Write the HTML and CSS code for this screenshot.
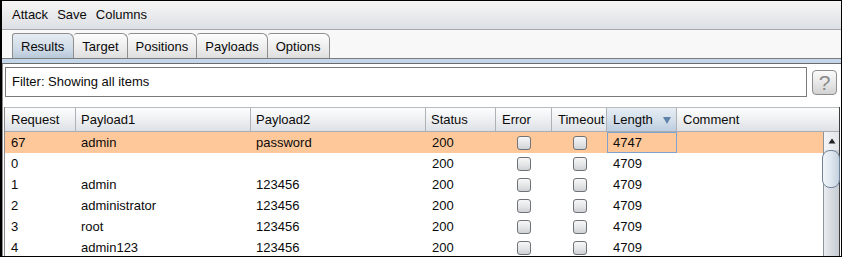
FILE: index.html
```html
<!DOCTYPE html>
<html>
<head>
<meta charset="utf-8">
<link rel="stylesheet" href="styles.css">
</head>
<body>
<div class="win">
  <div class="menubar">
    <span class="menu-item">Attack</span>
    <span class="menu-item">Save</span>
    <span class="menu-item">Columns</span>
  </div>
  <div class="tabbar">
    <div class="tab sel">Results</div>
    <div class="tab">Target</div>
    <div class="tab">Positions</div>
    <div class="tab">Payloads</div>
    <div class="tab">Options</div>
  </div>
  <div class="band"></div>
  <div class="content">
    <div class="filter-row">
      <div class="filter">Filter: Showing all items</div>
      <div class="help">?</div>
    </div>
    <div class="table">
      <div class="thead">
        <div class="th">Request</div>
        <div class="th">Payload1</div>
        <div class="th">Payload2</div>
        <div class="th">Status</div>
        <div class="th">Error</div>
        <div class="th">Timeout</div>
        <div class="th sorted">Length<span class="sort-arrow"></span></div>
        <div class="th last">Comment</div>
      </div>
      <div class="body-wrap">
        <div class="tbody">
          <div class="tr hl">
            <div class="td">67</div><div class="td">admin</div><div class="td">password</div><div class="td">200</div>
            <div class="td cb"><span class="check"></span></div><div class="td cb"><span class="check"></span></div>
            <div class="td focus">4747</div><div class="td"></div>
          </div>
          <div class="tr">
            <div class="td">0</div><div class="td"></div><div class="td"></div><div class="td">200</div>
            <div class="td cb"><span class="check"></span></div><div class="td cb"><span class="check"></span></div>
            <div class="td">4709</div><div class="td"></div>
          </div>
          <div class="tr">
            <div class="td">1</div><div class="td">admin</div><div class="td">123456</div><div class="td">200</div>
            <div class="td cb"><span class="check"></span></div><div class="td cb"><span class="check"></span></div>
            <div class="td">4709</div><div class="td"></div>
          </div>
          <div class="tr">
            <div class="td">2</div><div class="td">administrator</div><div class="td">123456</div><div class="td">200</div>
            <div class="td cb"><span class="check"></span></div><div class="td cb"><span class="check"></span></div>
            <div class="td">4709</div><div class="td"></div>
          </div>
          <div class="tr">
            <div class="td">3</div><div class="td">root</div><div class="td">123456</div><div class="td">200</div>
            <div class="td cb"><span class="check"></span></div><div class="td cb"><span class="check"></span></div>
            <div class="td">4709</div><div class="td"></div>
          </div>
          <div class="tr">
            <div class="td">4</div><div class="td">admin123</div><div class="td">123456</div><div class="td">200</div>
            <div class="td cb"><span class="check"></span></div><div class="td cb"><span class="check"></span></div>
            <div class="td">4709</div><div class="td"></div>
          </div>
        </div>
        <div class="scrollbar">
          <div class="sb-up"><svg width="8" height="6" viewBox="0 0 8 6"><path d="M4 0.5 L7.5 5.5 L0.5 5.5 Z" fill="#222"/></svg></div>
          <div class="sb-thumb"></div>
        </div>
      </div>
    </div>
  </div>
</div>
</body>
</html>
```
FILE: styles.css
```css
* { box-sizing: border-box; }
html, body { margin: 0; padding: 0; background: #000; }
body {
  width: 842px;
  height: 257px;
  overflow: hidden;
  font-family: "Liberation Sans", Arial, sans-serif;
  font-size: 13px;
  color: #0a0a0a;
}
.win {
  width: 842px;
  height: 257px;
  border-top: 1px solid #000;
  border-left: 2px solid #000;
  border-right: 1px solid #000;
  border-bottom: 1px solid #000;
  background: #fff;
  overflow: hidden;
  display: flex;
  flex-direction: column;
}
.menubar {
  height: 29px;
  flex: none;
  display: flex;
  align-items: center;
  padding-left: 10px;
  gap: 9px;
  background: linear-gradient(#f6f6f6, #e9eaec 55%, #dcdfe4);
  border-bottom: 1px solid #a6a8ab;
}
.menu-item { line-height: 28px; }
.tabbar {
  height: 28px;
  flex: none;
  display: flex;
  align-items: flex-end;
  padding-left: 10px;
  background: #f8f8f8;
}
.tab {
  height: 25px;
  line-height: 25px;
  padding: 0 8px 0 8px;
  border: 1px solid #8e8e8e;
  border-bottom: none;
  border-left: none;
  border-radius: 3px 6px 0 0;
  background: linear-gradient(#fdfdfd, #ececec 60%, #dedede);
}
.tab:first-child { border-left: 1px solid #8e8e8e; }
.tab.sel {
  background: linear-gradient(#e6ecf2, #cfdbe7 60%, #b8c9da);
  padding: 0 9px 0 8px;
}
.band {
  height: 6px;
  flex: none;
  border-top: 1px solid #7c7c7c;
  border-bottom: 1px solid #6c6c6c;
  background: #c3d6ea;
}
.content {
  flex: 1;
  background: #fff;
  padding: 3px 1px 0 2px;
  border-left: 1px solid #8a8a8a;
}
.filter-row {
  display: flex;
  align-items: center;
  height: 30px;
  margin-bottom: 10px;
  gap: 5px;
}
.filter {
  width: 802px;
  height: 30px;
  border: 1px solid #7a7a7a;
  padding-left: 6px;
  line-height: 28px;
  background: #fff;
}
.help {
  width: 25px;
  height: 25px;
  border: 1px solid #8d8d8d;
  border-radius: 4px;
  background: linear-gradient(#fbfbfb, #e6e6e6 55%, #d2d2d2);
  color: #8a8a8a;
  font-size: 21px;
  line-height: 23px;
  text-align: center;
}
.table {
  border-left: 1px solid #8a8a8a;
  border-right: 1px solid #3c3c3c;
  margin-left: -1px;
}
.thead {
  display: grid;
  grid-template-columns: 71px 175px 175px 70px 56px 55px 70px 1fr;
  height: 25px;
  background: linear-gradient(#fdfdfd, #eef0f2 50%, #dde0e5);
  border-top: 1px solid #b9bcc0;
  border-bottom: 1px solid #a9adb2;
}
.th {
  padding-left: 6px;
  line-height: 23px;
  border-right: 1px solid #aeb2b7;
  position: relative;
}
.th:nth-child(2), .th:nth-child(3), .th:nth-child(4) { padding-left: 5px; }
.th.last { border-right: none; }
.th.sorted {
  background: linear-gradient(#e6edf4, #d2deea 55%, #bccddf);
}
.sort-arrow {
  position: absolute;
  right: 5px;
  top: 9px;
  width: 0;
  height: 0;
  border-left: 4px solid transparent;
  border-right: 4px solid transparent;
  border-top: 7px solid #5f82ab;
}
.body-wrap {
  display: flex;
  height: 130px;
}
.tbody { flex: 1; }
.tr {
  display: grid;
  grid-template-columns: 71px 175px 175px 70px 56px 55px 70px 1fr;
  height: 21px;
}
.tr.hl { background: #ffc89a; }
.td {
  padding-left: 6px;
  padding-top: 1px;
  line-height: 20px;
  white-space: nowrap;
}
.td:nth-child(2), .td:nth-child(3) { padding-left: 5px; }
.td.cb {
  padding: 1px 0 0 0;
  display: flex;
  align-items: center;
  justify-content: center;
}
.check {
  width: 14px;
  height: 14px;
  border: 1px solid #6f7276;
  border-radius: 3px;
  background: linear-gradient(#f7f7f7, #e4e5e7 55%, #cfd1d4);
}
.td.focus {
  border: 1px solid #7ea2cc;
  padding-left: 5px;
  padding-top: 0;
  line-height: 19px;
}
.scrollbar {
  width: 16px;
  flex: none;
  border-left: 1px solid #8e949c;
  background: linear-gradient(90deg, #e9ecf0, #d7dbe1 50%, #c6cbd3);
  display: flex;
  flex-direction: column;
}
.sb-up {
  height: 18px;
  display: flex;
  align-items: center;
  justify-content: center;
  background: linear-gradient(90deg, #f2f4f6, #e2e5e9);
}
.sb-thumb {
  height: 38px;
  margin: 0 -1px 0 -2px;
  border: 1px solid #6f8297;
  border-radius: 8px;
  background: linear-gradient(90deg, #f3f6f9, #dfe7ef 50%, #c4d1df);
}
```
